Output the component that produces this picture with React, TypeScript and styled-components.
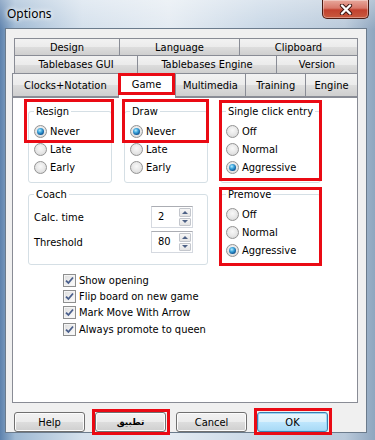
import styled, { createGlobalStyle } from 'styled-components';

const UI_FONT = `Tahoma, "DejaVu Sans Condensed", "DejaVu Sans", sans-serif`;

const GlobalStyle = createGlobalStyle`
  html, body {
    margin: 0;
    padding: 0;
  }
  body {
    width: 375px;
    height: 440px;
    overflow: hidden;
  }
`;

const Window = styled.div`
  width: 375px;
  height: 440px;
  box-sizing: border-box;
  display: flex;
  flex-direction: column;
  background:
    linear-gradient(180deg, rgba(255, 255, 255, 0.35) 0, rgba(255, 255, 255, 0) 30px),
    linear-gradient(90deg, #5d82ad 0, #9fb9d3 4%, #d4e0ec 22%, #e4ebf2 45%, #c8d7e6 70%, #b9c9da 92%, #8fa6bf 100%);
  font-family: ${UI_FONT};
  font-size: 11px;
  color: #000;
`;

const TitleBar = styled.div`
  height: 28px;
  display: flex;
  align-items: flex-start;
  flex-shrink: 0;
`;

const Title = styled.div`
  padding-left: 7px;
  line-height: 28px;
  font-family: "Noto Sans", "Open Sans", sans-serif;
  font-size: 12px;
  text-shadow: 0 0 6px #fff, 0 0 4px #fff;
`;

const CloseButton = styled.div`
  margin-left: auto;
  margin-right: 6px;
  width: 47px;
  height: 19px;
  box-sizing: border-box;
  border: 1px solid #4a1a12;
  border-top: none;
  border-radius: 0 0 5px 5px;
  background: linear-gradient(180deg, #e8a89c 0, #d8786a 45%, #c2412e 55%, #c85a3f 100%);
  box-shadow: inset 0 0 0 1px rgba(255, 255, 255, 0.35);
  display: flex;
  align-items: center;
  justify-content: center;
`;

const Client = styled.div`
  flex: 1;
  margin: 0 8px 7px 5px;
  border: 1px solid #6b7b8c;
  background: #f0f0f0;
  padding: 9px 8px 0 6px;
  display: flex;
  flex-direction: column;
`;

const TabStrip = styled.div`
  display: flex;
  flex-direction: column;
`;

const TabRow = styled.div<{ $inset: number; $height: number }>`
  display: flex;
  align-items: flex-end;
  padding-left: ${(p) => p.$inset}px;
  height: ${(p) => p.$height}px;
  & + & {
    margin-top: -1px;
  }
`;

const Tab = styled.div<{ $w: number; $active?: boolean }>`
  position: relative;
  width: ${(p) => p.$w}px;
  height: ${(p) => (p.$active ? 'calc(100% + 1px)' : '100%')};
  margin-bottom: ${(p) => (p.$active ? '-1px' : '0')};
  box-sizing: border-box;
  border: 1px solid #898c95;
  border-bottom: ${(p) => (p.$active ? 'none' : '1px solid #898c95')};
  background: ${(p) =>
    p.$active ? '#fff' : 'linear-gradient(180deg, #f2f2f2 0, #ebebeb 50%, #dddddd 51%, #cfcfcf 100%)'};
  z-index: ${(p) => (p.$active ? 1 : 0)};
  display: flex;
  align-items: center;
  justify-content: center;
  padding-bottom: ${(p) => (p.$active ? '4px' : '0')};
  white-space: nowrap;
  & + & {
    margin-left: -1px;
  }
`;

const Marked = styled.div<{ $t: number; $l: number; $w: number; $h: number }>`
  position: relative;
  &::after {
    content: '';
    position: absolute;
    top: ${(p) => p.$t}px;
    left: ${(p) => p.$l}px;
    width: ${(p) => p.$w}px;
    height: ${(p) => p.$h}px;
    box-sizing: border-box;
    border: 3px solid #ea0a14;
    pointer-events: none;
    z-index: 2;
  }
`;

const TabMark = styled.div`
  position: absolute;
  top: -1px;
  left: -1px;
  width: 57px;
  height: 22px;
  box-sizing: border-box;
  border: 3px solid #ea0a14;
`;

const Panel = styled.div`
  flex: 1;
  position: relative;
  background: #fff;
  border: 1px solid #898c95;
  padding: 7px 0 0 15px;
  display: flex;
  flex-direction: column;
`;

const Columns = styled.div`
  display: flex;
  gap: 12px;
`;

const Column = styled.div<{ $w: number }>`
  width: ${(p) => p.$w}px;
  display: flex;
  flex-direction: column;
  gap: 5px;
`;

const GroupRow = styled.div`
  display: flex;
  gap: 12px;
`;

const Group = styled.fieldset<{ $w: number; $pb?: number }>`
  margin: 0;
  width: ${(p) => p.$w}px;
  min-width: 0;
  box-sizing: border-box;
  padding: 0 0 ${(p) => p.$pb ?? 6}px 5px;
  border: 1px solid #d5dfe5;
  border-radius: 3px;
`;

const Legend = styled.legend`
  padding: 0 2px;
  line-height: 13px;
  white-space: nowrap;
`;

const Options = styled.div`
  display: flex;
  flex-direction: column;
  margin-top: 4px;
`;

const OptionRow = styled.label`
  display: flex;
  align-items: center;
  gap: 3px;
  height: 18px;
  white-space: nowrap;
`;

const RadioCircle = styled.span<{ $on?: boolean }>`
  width: 13px;
  height: 13px;
  box-sizing: border-box;
  border-radius: 50%;
  border: 1px solid #939393;
  background: radial-gradient(circle at 50% 40%, #f8f8f8 0, #e6e6e6 55%, #cfcfcf 100%);
  display: flex;
  align-items: center;
  justify-content: center;
  flex-shrink: 0;
  &::after {
    content: '';
    display: ${(p) => (p.$on ? 'block' : 'none')};
    width: 7px;
    height: 7px;
    border-radius: 50%;
    background: radial-gradient(circle at 40% 35%, #b9ecff 0, #3ea6dc 35%, #105a99 70%, #0b345f 100%);
  }
`;

const CoachRows = styled.div`
  display: flex;
  flex-direction: column;
  gap: 3px;
  margin-top: 5px;
`;

const CoachRow = styled.div`
  display: flex;
  align-items: center;
  height: 22px;
  padding-right: 14px;
`;

const CoachLabel = styled.span`
  flex: 1;
`;

const Spinner = styled.div`
  width: 42px;
  height: 22px;
  box-sizing: border-box;
  border: 1px solid #d5d9e0;
  border-top-color: #abadb3;
  background: #fff;
  display: flex;
`;

const SpinValue = styled.span`
  flex: 1;
  padding-left: 6px;
  line-height: 20px;
`;

const SpinButtons = styled.div`
  width: 12px;
  display: flex;
  flex-direction: column;
  gap: 1px;
  padding: 1px 1px 1px 0;
`;

const SpinButton = styled.div<{ $up?: boolean }>`
  flex: 1;
  border: 1px solid #c3c6cc;
  border-radius: 1px;
  background: linear-gradient(180deg, #f6f6f6 0, #e4e4e4 100%);
  display: flex;
  align-items: center;
  justify-content: center;
  &::after {
    content: '';
    width: 0;
    height: 0;
    border-left: 3px solid transparent;
    border-right: 3px solid transparent;
    ${(p) => (p.$up ? 'border-bottom: 3px solid #4d6185;' : 'border-top: 3px solid #4d6185;')}
  }
`;

const CheckList = styled.div`
  display: flex;
  flex-direction: column;
  margin-top: 6px;
  padding-left: 35px;
`;

const CheckRow = styled.label`
  display: flex;
  align-items: center;
  gap: 3px;
  height: 16.4px;
  white-space: nowrap;
`;

const CheckBox = styled.span`
  width: 13px;
  height: 13px;
  box-sizing: border-box;
  border: 1px solid #8e8f8f;
  background: linear-gradient(135deg, #dcdcdc 0, #f4f4f4 70%, #fdfdfd 100%);
  box-shadow: inset 0 0 0 1px #f4f4f4;
  display: flex;
  align-items: center;
  justify-content: center;
  flex-shrink: 0;
`;

const ButtonRow = styled.div`
  display: flex;
  gap: 10px;
  margin-top: 9px;
  padding-left: 2px;
  flex-shrink: 0;
`;

const Button = styled.div<{ $default?: boolean; $arabic?: boolean }>`
  width: 71px;
  height: 20px;
  box-sizing: border-box;
  border: 1px solid ${(p) => (p.$default ? '#3c7fb1' : '#707070')};
  border-radius: 3px;
  background: ${(p) =>
    p.$default
      ? 'linear-gradient(180deg, #eaf6fd 0, #d9f0fc 50%, #bee6fd 51%, #a7d9f5 100%)'
      : 'linear-gradient(180deg, #f2f2f2 0, #ebebeb 50%, #dddddd 51%, #cfcfcf 100%)'};
  box-shadow: inset 0 0 0 1px ${(p) => (p.$default ? '#9ad6f5' : '#fcfcfc')};
  display: flex;
  align-items: center;
  justify-content: center;
  font-family: ${(p) => (p.$arabic ? '"DejaVu Sans", sans-serif' : UI_FONT)};
  font-weight: ${(p) => (p.$arabic ? 700 : 400)};
  font-size: ${(p) => (p.$arabic ? '9px' : '11px')};
`;

const Radio = ({ label, on }: { label: string; on?: boolean }) => (
  <OptionRow>
    <RadioCircle $on={on} />
    {label}
  </OptionRow>
);

const Check = ({ label }: { label: string }) => (
  <CheckRow>
    <CheckBox>
      <svg width="9" height="9" viewBox="0 0 9 9">
        <path d="M1 4.6 L3.4 7 L8 1.5" fill="none" stroke="#4a5f8c" strokeWidth="1.8" />
      </svg>
    </CheckBox>
    {label}
  </CheckRow>
);

const Spin = ({ value }: { value: string }) => (
  <Spinner>
    <SpinValue>{value}</SpinValue>
    <SpinButtons>
      <SpinButton $up />
      <SpinButton />
    </SpinButtons>
  </Spinner>
);

const tabRows = [
  { inset: 2, height: 18, tabs: [['Design', 106], ['Language', 121], ['Clipboard', 119]] },
  { inset: 2, height: 19, tabs: [['Tablebases GUI', 124], ['Tablebases Engine', 140], ['Version', 82]] },
  {
    inset: 0,
    height: 24,
    tabs: [['Clocks+Notation', 107], ['Game', 58], ['Multimedia', 72], ['Training', 61], ['Engine', 53]],
  },
] as const;

export default function App() {
  return (
    <Window>
      <GlobalStyle />
      <TitleBar>
        <Title>Options</Title>
        <CloseButton>
          <svg width="16" height="11" viewBox="0 0 16 11">
            <path d="M4 1.5 L12 9.5 M12 1.5 L4 9.5" stroke="#3a1410" strokeWidth="4.2" strokeLinecap="round" />
            <path d="M4 1.5 L12 9.5 M12 1.5 L4 9.5" stroke="#fff" strokeWidth="2.4" strokeLinecap="round" />
          </svg>
        </CloseButton>
      </TitleBar>
      <Client>
        <TabStrip>
          {tabRows.map((row, i) => (
            <TabRow key={i} $inset={row.inset} $height={row.height}>
              {row.tabs.map(([name, w]) => (
                <Tab key={name} $w={w} $active={name === 'Game'}>
                  {name}
                  {name === 'Game' && <TabMark />}
                </Tab>
              ))}
            </TabRow>
          ))}
        </TabStrip>
        <Panel>
          <Columns>
            <Column $w={180}>
              <GroupRow>
                <Marked $t={-6} $l={-4} $w={90} $h={44}>
                  <Group $w={84}>
                    <Legend>Resign</Legend>
                    <Options>
                      <Radio label="Never" on />
                      <Radio label="Late" />
                      <Radio label="Early" />
                    </Options>
                  </Group>
                </Marked>
                <Marked $t={-6} $l={-2} $w={87} $h={44}>
                  <Group $w={84}>
                    <Legend>Draw</Legend>
                    <Options>
                      <Radio label="Never" on />
                      <Radio label="Late" />
                      <Radio label="Early" />
                    </Options>
                  </Group>
                </Marked>
              </GroupRow>
              <Group $w={180} $pb={11}>
                <Legend>Coach</Legend>
                <CoachRows>
                  <CoachRow>
                    <CoachLabel>Calc. time</CoachLabel>
                    <Spin value="2" />
                  </CoachRow>
                  <CoachRow>
                    <CoachLabel>Threshold</CoachLabel>
                    <Spin value="80" />
                  </CoachRow>
                </CoachRows>
              </Group>
            </Column>
            <Column $w={101}>
              <Marked $t={-5} $l={-1} $w={103} $h={81}>
                <Group $w={101}>
                  <Legend>Single click entry</Legend>
                  <Options>
                    <Radio label="Off" />
                    <Radio label="Normal" />
                    <Radio label="Aggressive" on />
                  </Options>
                </Group>
              </Marked>
              <Marked $t={-1} $l={-1} $w={103} $h={79}>
                <Group $w={101}>
                  <Legend>Premove</Legend>
                  <Options>
                    <Radio label="Off" />
                    <Radio label="Normal" />
                    <Radio label="Aggressive" on />
                  </Options>
                </Group>
              </Marked>
            </Column>
          </Columns>
          <CheckList>
            <Check label="Show opening" />
            <Check label="Flip board on new game" />
            <Check label="Mark Move With Arrow" />
            <Check label="Always promote to queen" />
          </CheckList>
        </Panel>
        <ButtonRow>
          <Button>Help</Button>
          <Marked $t={-3} $l={-3} $w={78} $h={26}>
            <Button $arabic>تطبيق</Button>
          </Marked>
          <Button>Cancel</Button>
          <Marked $t={-4} $l={-3} $w={78} $h={27}>
            <Button $default>OK</Button>
          </Marked>
        </ButtonRow>
      </Client>
    </Window>
  );
}
